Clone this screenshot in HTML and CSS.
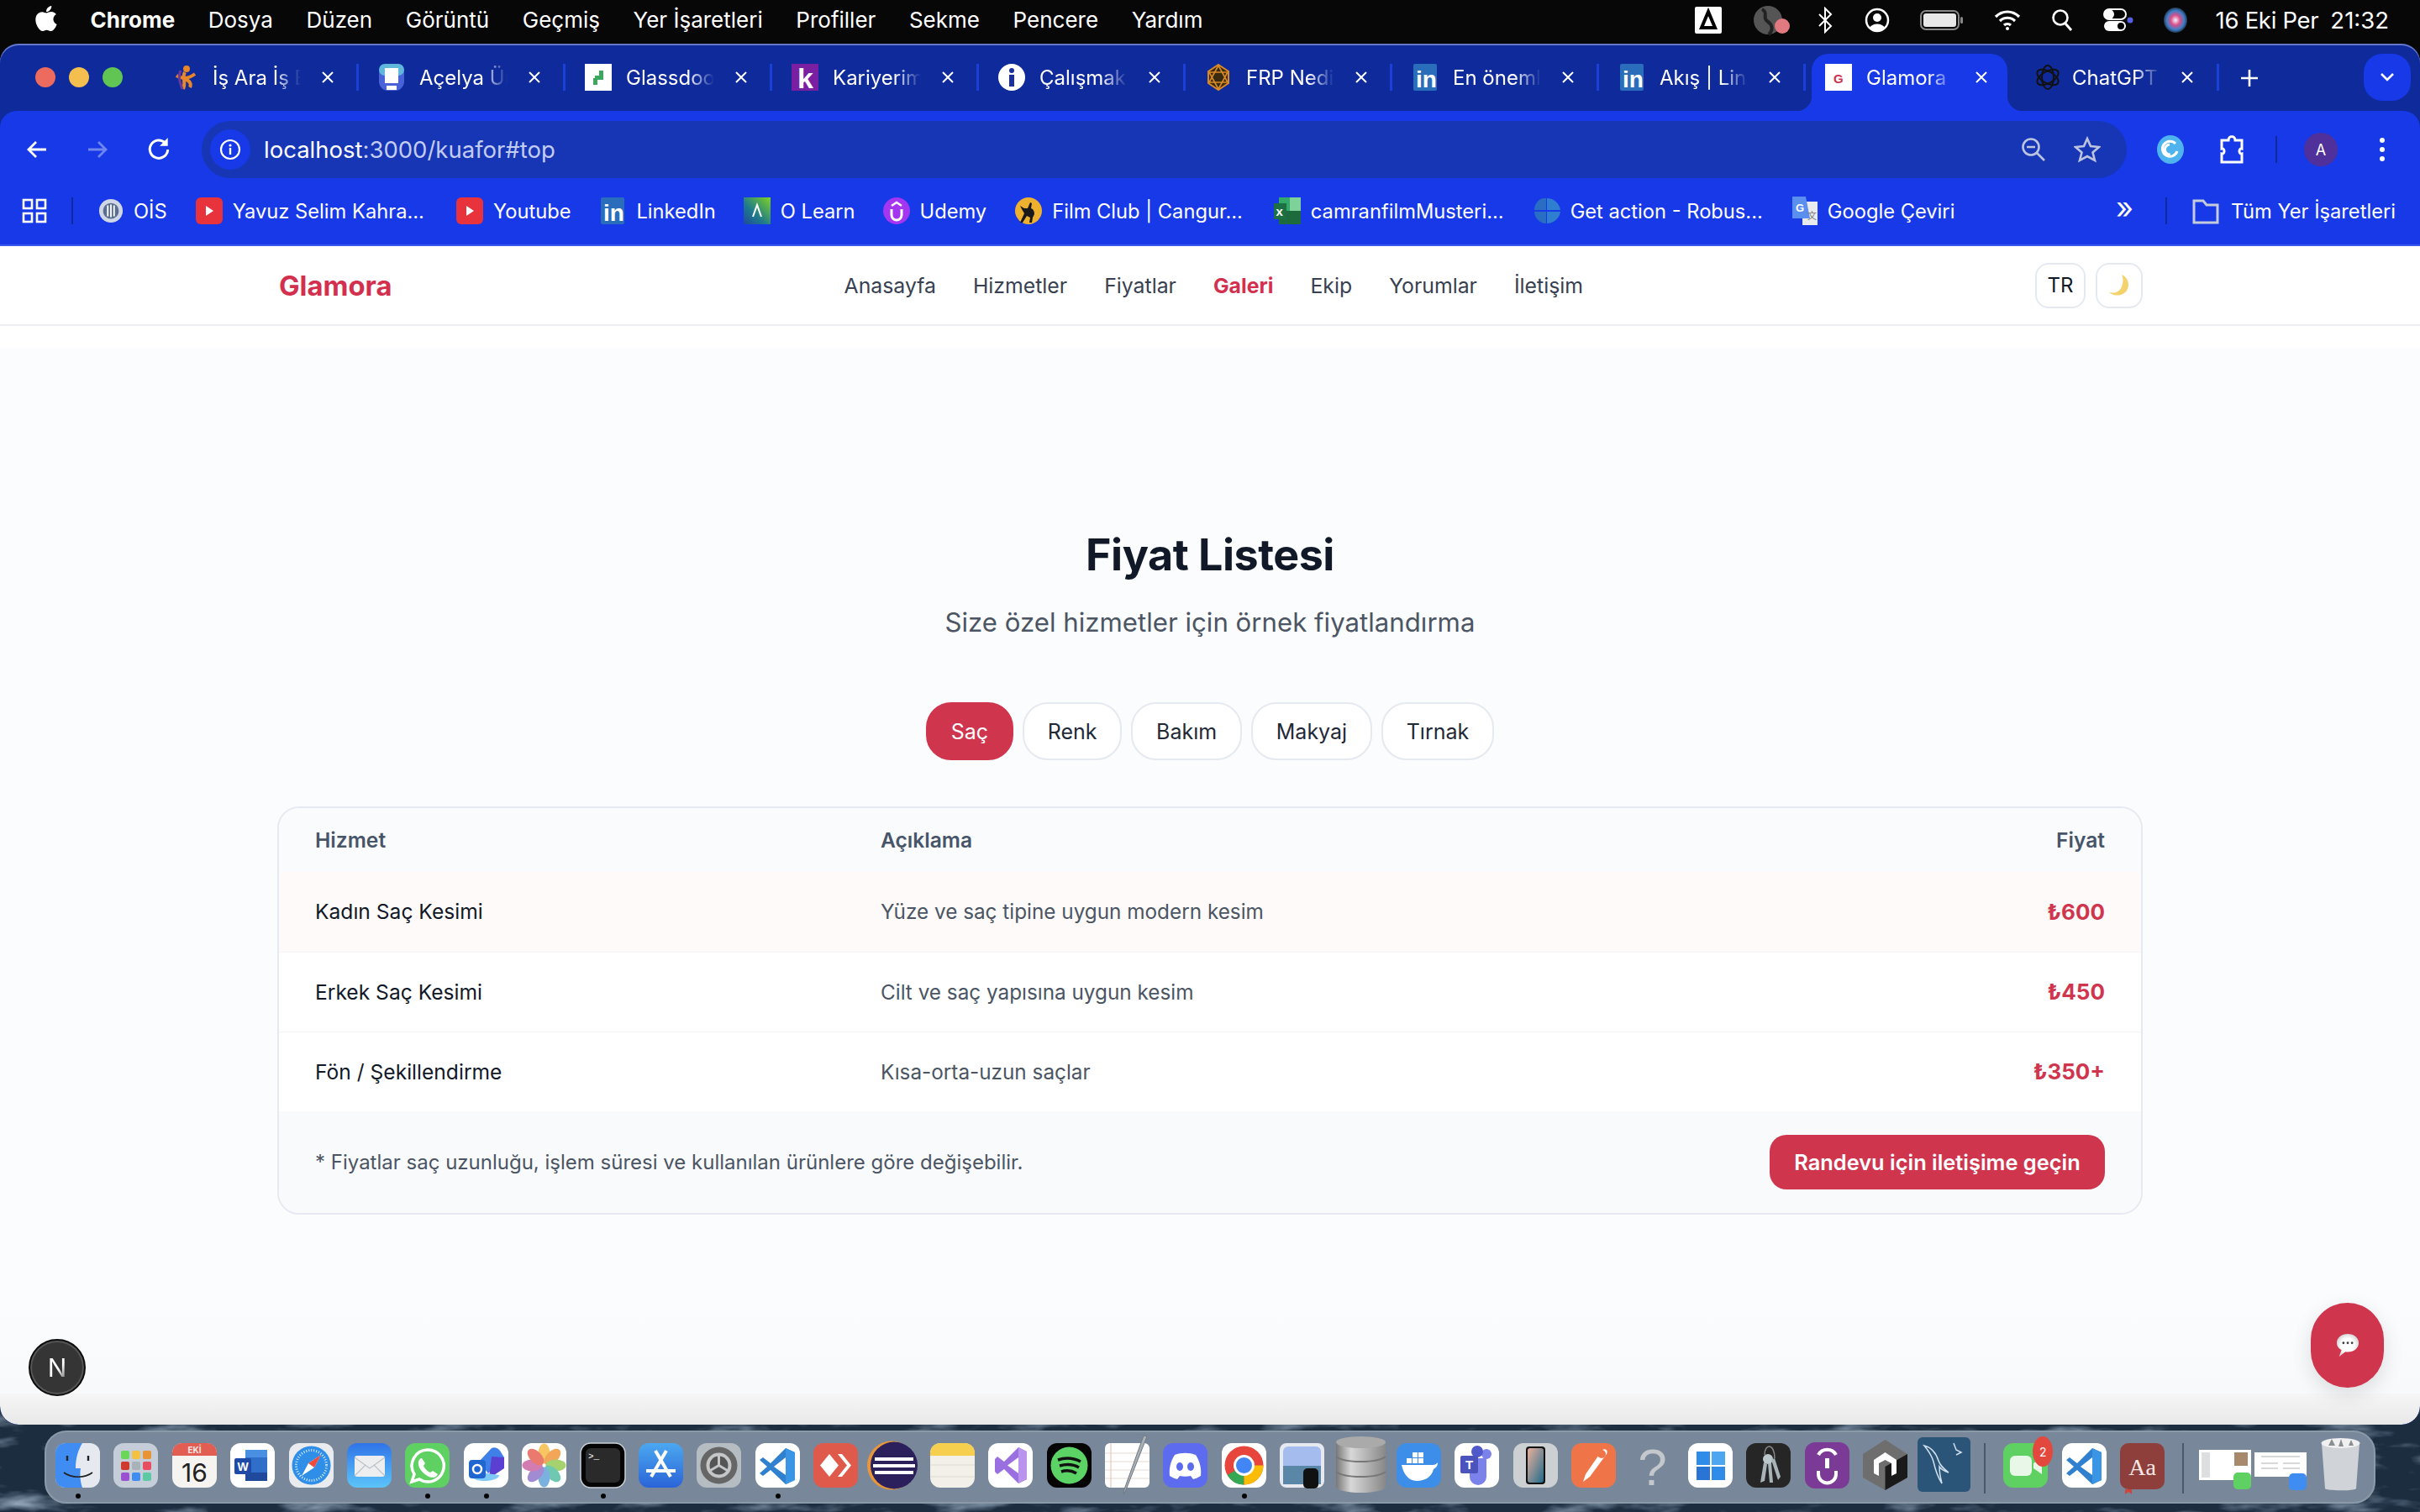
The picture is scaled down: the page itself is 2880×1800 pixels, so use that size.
FILE: index.html
```html
<!DOCTYPE html>
<html lang="tr">
<head>
  <meta charset="UTF-8">
  <title>Glamora</title>
  <link rel="stylesheet" href="styles.css">
</head>
<body>

  <svg class="wallpaper" width="2880" height="1800">
    <filter id="rock"><feTurbulence type="fractalNoise" baseFrequency="0.012 0.04" numOctaves="4" seed="7"/>
      <feColorMatrix values="0 0 0 0 .34  0 0 0 0 .44  0 0 0 0 .55  0 0 0 2.2 -1.1"/></filter>
    <rect width="2880" height="1800" fill="#1c2d40"/>
    <rect width="2880" height="1800" filter="url(#rock)"/>
    <rect width="2880" height="300" fill="#070707"/>
  </svg>

  <svg width="0" height="0" class="defs">
    <symbol id="close" viewBox="0 0 16 16"><path d="M2 2l12 12M14 2L2 14" stroke="#fff" stroke-width="2" fill="none"/></symbol>
    <symbol id="linkedin" viewBox="0 0 28 32"><rect width="28" height="32" rx="2" fill="#2a6ebb"/><text x="3" y="28" font-family="Liberation Sans" font-weight="700" font-size="28" fill="#fff">in</text></symbol>
    <symbol id="vscode" viewBox="0 0 53 53"><rect width="53" height="53" rx="12" fill="#fff"/><path d="M36 6L18 24l-9-7-4 3 9 8-9 8 4 3 9-7 18 17 11-5V11z" fill="#2f80cf"/><path d="M36 17v21L22 28z" fill="#fff"/><path d="M36 6l11 5v33l-11 5z" fill="#3a95e4"/></symbol>
  </svg>

  <!-- macos menu bar -->
  <header class="menubar">
    <div class="menu-left">
      <svg class="apple" viewBox="0 0 24 24"><path fill="#fff" d="M17.05 20.28c-.98.95-2.05.8-3.08.35-1.09-.46-2.09-.48-3.24 0-1.44.62-2.2.44-3.06-.35C2.79 15.25 3.51 7.59 9.05 7.31c1.35.07 2.29.74 3.08.8 1.18-.24 2.31-.93 3.57-.84 1.51.12 2.65.72 3.4 1.8-3.12 1.87-2.38 5.98.48 7.13-.57 1.5-1.31 2.99-2.54 4.09zM12.03 7.25c-.15-2.23 1.66-4.07 3.74-4.25.29 2.58-2.34 4.5-3.74 4.25z"/></svg>
      <b>Chrome</b><span>Dosya</span><span>Düzen</span><span>Görüntü</span><span>Geçmiş</span><span>Yer İşaretleri</span><span>Profiller</span><span>Sekme</span><span>Pencere</span><span>Yardım</span>
    </div>
    <div class="menu-right">
      <svg width="32" height="32" viewBox="0 0 32 32"><rect width="32" height="32" rx="2" fill="#fff"/><path d="M16 6L8 25h16z" fill="none" stroke="#000" stroke-width="4"/></svg>
      <svg width="46" height="38" viewBox="0 0 46 38"><circle cx="19" cy="19" r="17" fill="#555"/><path d="M12 6c8 4 0 10 6 14s8 10 2 16" stroke="#222" stroke-width="4" fill="none"/><circle cx="36" cy="26" r="9" fill="#e07a80"/></svg>
      <svg class="bt" width="18" height="32" viewBox="0 0 18 32"><path d="M2 9l14 14-7 7V2l7 7L2 23" stroke="#fff" stroke-width="2" fill="none"/></svg>
      <svg width="30" height="30" viewBox="0 0 30 30"><circle cx="15" cy="15" r="13" stroke="#fff" stroke-width="2.5" fill="none"/><circle cx="15" cy="12" r="5" fill="#fff"/><path d="M6 24c3-6 15-6 18 0-5 5-13 5-18 0z" fill="#fff"/></svg>
      <svg width="52" height="24" viewBox="0 0 52 24"><rect x="1" y="1" width="45" height="22" rx="6" stroke="#888" stroke-width="2" fill="none"/><rect x="4" y="4" width="39" height="16" rx="3" fill="#e8e8e8"/><rect x="48" y="8" width="3" height="8" rx="1.5" fill="#888"/></svg>
      <svg width="32" height="24" viewBox="0 0 32 24"><path d="M2 8c8-8 20-8 28 0M7 13c5-5 13-5 18 0M12 18c2-2 6-2 8 0" stroke="#fff" stroke-width="3.2" fill="none"/><circle cx="16" cy="22" r="2" fill="#fff"/></svg>
      <svg width="26" height="28" viewBox="0 0 26 28"><circle cx="11" cy="11" r="8.5" stroke="#fff" stroke-width="2.6" fill="none"/><path d="M17 18l7 8" stroke="#fff" stroke-width="3"/></svg>
      <svg width="36" height="28" viewBox="0 0 36 28"><rect x="1" y="1" width="26" height="12" rx="6" fill="none" stroke="#fff" stroke-width="2"/><circle cx="7" cy="7" r="6" fill="#fff"/><rect x="1" y="15" width="26" height="12" rx="6" fill="#fff"/><circle cx="21" cy="21" r="4" fill="#000"/><circle cx="32" cy="14" r="3.5" fill="#5560e0"/></svg>
      <svg width="28" height="30" viewBox="0 0 28 30"><defs><radialGradient id="siri"><stop offset="0" stop-color="#f4f4ff"/><stop offset=".4" stop-color="#d94f88"/><stop offset=".75" stop-color="#3f7fc9"/><stop offset="1" stop-color="#1f3a55"/></radialGradient></defs><ellipse cx="14" cy="15" rx="14" ry="15" fill="url(#siri)"/></svg>
      <span class="clock">16 Eki Per</span><span class="time">21:32</span>
    </div>
  </header>

  <div class="window">

    <!-- tab strip -->
    <div class="tabstrip">
      <div class="lights"><i class="red"></i><i class="yellow"></i><i class="green"></i></div>
      <div class="tab">
        <svg class="fav" viewBox="0 0 32 32"><circle cx="18" cy="6" r="4" fill="#e8862a"/><path d="M6 14c6 4 14 4 22-2M16 10c-4 6 2 10-2 20M16 18c6 2 8 6 6 10" stroke="#e8862a" stroke-width="4" fill="none"/><path d="M11 8c-4 8 0 16 2 22" stroke="#6a3a9a" stroke-width="3" fill="none"/></svg>
        <span class="tab-title">İş Ara İş Bul</span><svg class="x"><use href="#close"/></svg>
      </div>
      <div class="tab">
        <svg class="fav" viewBox="0 0 32 32"><rect x="1" y="0" width="30" height="32" rx="11" fill="#4a62d8"/><rect x="1" y="0" width="30" height="14" rx="7" fill="#5fb8dc"/><rect x="8" y="5" width="16" height="18" fill="#fff"/><rect x="10" y="26" width="12" height="5" fill="#fff"/></svg>
        <span class="tab-title">Açelya Ünal</span><svg class="x"><use href="#close"/></svg>
      </div>
      <div class="tab">
        <svg class="fav" viewBox="0 0 32 32"><rect width="32" height="32" fill="#fff"/><path d="M17 8h5v11H12v-5h5zM10 17h5v8h-5z" fill="#3da75f"/></svg>
        <span class="tab-title">Glassdoor</span><svg class="x"><use href="#close"/></svg>
      </div>
      <div class="tab">
        <svg class="fav" viewBox="0 0 32 32"><rect width="32" height="32" fill="#7b1fa2"/><text x="7" y="29" font-family="Liberation Sans" font-weight="700" font-size="34" fill="#fff">k</text></svg>
        <span class="tab-title">Kariyerim</span><svg class="x"><use href="#close"/></svg>
      </div>
      <div class="tab">
        <svg class="fav" viewBox="0 0 32 32"><circle cx="16" cy="16" r="16" fill="#fff"/><circle cx="16" cy="8" r="3" fill="#1b2f9e"/><rect x="13" y="13" width="6" height="14" fill="#1b2f9e"/></svg>
        <span class="tab-title">Çalışmak</span><svg class="x"><use href="#close"/></svg>
      </div>
      <div class="tab">
        <svg class="fav" viewBox="0 0 32 32"><path d="M16 1l12 8v14l-12 8-12-8V9z" fill="#3a2a10" stroke="#d98a24" stroke-width="2"/><path d="M5 10h22L16 30zM5 22h22L16 2z" fill="none" stroke="#d98a24" stroke-width="1.600"/></svg>
        <span class="tab-title">FRP Nedir</span><svg class="x"><use href="#close"/></svg>
      </div>
      <div class="tab">
        <svg class="fav"><use href="#linkedin"/></svg>
        <span class="tab-title">En önemli</span><svg class="x"><use href="#close"/></svg>
      </div>
      <div class="tab">
        <svg class="fav"><use href="#linkedin"/></svg>
        <span class="tab-title">Akış | LinkedIn</span><svg class="x"><use href="#close"/></svg>
      </div>
      <div class="tab active">
        <svg class="fav" viewBox="0 0 32 32"><rect width="32" height="32" fill="#fff"/><text x="10" y="23" font-family="Liberation Sans" font-weight="700" font-size="15" fill="#d2304e">G</text></svg>
        <span class="tab-title">Glamora |</span><svg class="x"><use href="#close"/></svg>
      </div>
      <div class="tab last">
        <svg class="fav" viewBox="0 0 32 32"><g fill="none" stroke="#111" stroke-width="2"><ellipse cx="16" cy="16" rx="7" ry="14"/><ellipse cx="16" cy="16" rx="7" ry="14" transform="rotate(60 16 16)"/><ellipse cx="16" cy="16" rx="7" ry="14" transform="rotate(120 16 16)"/></g></svg>
        <span class="tab-title">ChatGPT</span><svg class="x"><use href="#close"/></svg>
      </div>
      <svg class="plus" viewBox="0 0 22 22"><path d="M11 1v20M1 11h20" stroke="#fff" stroke-width="2.6"/></svg>
      <div class="tab-menu"><svg width="18" height="12" viewBox="0 0 18 12"><path d="M2 2l7 7 7-7" stroke="#fff" stroke-width="2.6" fill="none"/></svg></div>
    </div>

    <!-- address bar -->
    <div class="toolbar">
      <svg class="nav-ico" viewBox="0 0 28 28"><path d="M25 14H4M13 5l-9 9 9 9" stroke="#fff" stroke-width="2.8" fill="none"/></svg>
      <svg class="nav-ico dim" viewBox="0 0 28 28"><path d="M3 14h21M15 5l9 9-9 9" stroke="#6f86ee" stroke-width="2.8" fill="none"/></svg>
      <svg class="nav-ico reload" viewBox="0 0 28 28"><path d="M24 14a10 10 0 1 1-3-7.500" stroke="#fff" stroke-width="2.800" fill="none"/><path d="M24 1v9h-9z" fill="#fff"/></svg>
      <div class="omnibox">
        <span class="site-info"><svg width="26" height="26" viewBox="0 0 26 26"><circle cx="13" cy="13" r="11" stroke="#fff" stroke-width="2.2" fill="none"/><circle cx="13" cy="8" r="1.6" fill="#fff"/><rect x="11.8" y="11" width="2.4" height="8" fill="#fff"/></svg></span>
        <span class="url">localhost<span class="url-rest">:3000/kuafor#top</span></span>
        <svg class="omni-ico" width="32" height="32" viewBox="0 0 32 32"><circle cx="13" cy="13" r="9.5" stroke="#bcc3de" stroke-width="2.6" fill="none"/><path d="M8 13h10M20 20l9 9" stroke="#bcc3de" stroke-width="2.6"/></svg>
        <svg class="omni-ico star" width="32" height="32" viewBox="0 0 32 32"><path d="M16 3l4 9 10 1-7.500 6.500L25 29l-9-5-9 5 2.500-9.500L2 13l10-1z" stroke="#bcc3de" stroke-width="2.6" fill="none"/></svg>
      </div>
      <svg class="ext" width="32" height="34" viewBox="0 0 32 34"><ellipse cx="16" cy="17" rx="16" ry="17" fill="#4fb3ee"/><path d="M22 10a9 9 0 1 0 2 9M16 23a6 6 0 0 1-1-12" stroke="#fff" stroke-width="3" fill="none"/></svg>
      <svg class="puzzle" width="32" height="36" viewBox="0 0 32 36"><path d="M4 7h8c0-6 8-6 8 0h8v10c-4-1-4 7 0 6v10H4V23c4 1 4-7 0-6z" stroke="#fff" stroke-width="3" fill="none"/></svg>
      <i class="tool-sep"></i>
      <span class="avatar">A</span>
      <svg class="kebab" width="8" height="30" viewBox="0 0 8 30"><circle cx="4" cy="4" r="3" fill="#fff"/><circle cx="4" cy="15" r="3" fill="#fff"/><circle cx="4" cy="26" r="3" fill="#fff"/></svg>
    </div>

    <!-- bookmarks -->
    <div class="bookmarks">
      <svg class="apps" width="30" height="30" viewBox="0 0 30 30"><g stroke="#fff" stroke-width="2.6" fill="none"><rect x="2" y="2" width="10" height="10"/><rect x="18" y="2" width="10" height="10"/><rect x="2" y="18" width="10" height="10"/><rect x="18" y="18" width="10" height="10"/></g></svg>
      <i class="book-sep"></i>
      <a class="bm ois"><svg width="30" height="32" viewBox="0 0 32 32"><circle cx="16" cy="16" r="15" fill="#cfd6e6"/><circle cx="16" cy="16" r="10" fill="#5a6f8f"/><path d="M12 9v14M16 8v16M20 9v14" stroke="#fff" stroke-width="2"/></svg>OİS</a>
      <a class="bm yt"><svg width="32" height="32" viewBox="0 0 32 32"><rect width="32" height="32" rx="6" fill="#e8323c"/><path d="M12 10l9 6-9 6z" fill="#fff"/></svg>Yavuz Selim Kahra...</a>
      <a class="bm yt2"><svg width="32" height="32" viewBox="0 0 32 32"><rect width="32" height="32" rx="6" fill="#e8323c"/><path d="M12 10l9 6-9 6z" fill="#fff"/></svg>Youtube</a>
      <a class="bm li"><svg width="28" height="32"><use href="#linkedin"/></svg>LinkedIn</a>
      <a class="bm ol"><svg width="32" height="32" viewBox="0 0 32 32"><defs><linearGradient id="ol" x1="1" y1="0" x2="0" y2="1"><stop offset="0" stop-color="#7ed321"/><stop offset=".6" stop-color="#1f7a8c"/><stop offset="1" stop-color="#1f4a9c"/></linearGradient></defs><rect width="32" height="32" fill="url(#ol)"/><path d="M11 23l5-14 5 14" stroke="#fff" stroke-width="2" fill="none"/></svg>O Learn</a>
      <a class="bm um"><svg width="32" height="32" viewBox="0 0 32 32"><circle cx="16" cy="16" r="16" fill="#a435f0"/><path d="M10 14v7a6 6 0 0 0 12 0v-7" stroke="#fff" stroke-width="3" fill="none"/><path d="M10 10l6-4 6 4" stroke="#fff" stroke-width="2.500" fill="none"/></svg>Udemy</a>
      <a class="bm fc"><svg width="32" height="32" viewBox="0 0 32 32"><circle cx="16" cy="16" r="16" fill="#eeb02f"/><path d="M6 10l5 3 4 0 3-7 2 1-1 6c3 1 4 4 4 7l-2 4-1 6h-3l1-6-4-2-5 8-3 0 5-11-3-5z" fill="#1a1a1a"/></svg>Film Club | Cangur...</a>
      <a class="bm xl"><svg width="32" height="32" viewBox="0 0 32 32"><rect x="6" width="26" height="32" fill="#33a868"/><rect x="19" y="0" width="13" height="16" fill="#7fd19a"/><rect x="6" y="16" width="26" height="16" fill="#1d6b3c"/><rect y="7" width="15" height="19" fill="#1d7044"/><text x="2.500" y="22" font-family="Liberation Sans" font-weight="700" font-size="15" fill="#fff">x</text></svg>camranfilmMusteri...</a>
      <a class="bm ga"><svg width="32" height="32" viewBox="0 0 32 32"><path d="M15 1h-2C6 1 1 8 1 15h14zM1 17c0 7 6 14 14 14V17z" fill="#2a6dc5"/><path d="M16 1c8 0 15 6 16 14H16zM16 17h16c-1 8-8 14-16 14z" fill="#2f7fd0"/></svg>Get action - Robus...</a>
      <a class="bm gt"><svg width="30" height="34" viewBox="0 0 30 34"><path d="M12 6h18v28H12z" fill="#e8eaed"/><path d="M0 0h16l5 26H0z" fill="#5a8ff0"/><text x="4" y="18" font-family="Liberation Sans" font-weight="700" font-size="13" fill="#fff">G</text><text x="18" y="27" font-family="Noto Sans CJK SC" font-size="11" fill="#777">文</text></svg>Google Çeviri</a>
      <span class="book-more">»</span>
      <i class="book-sep"></i>
      <a class="bm folder"><svg width="32" height="32" viewBox="0 0 32 32"><path d="M2 4h11l4 5h13v21H2z" stroke="#c6cbdc" stroke-width="3" fill="none"/></svg>Tüm Yer İşaretleri</a>
    </div>

    <!-- page -->
    <main class="page">
      <nav class="site-nav">
        <a class="logo">Glamora</a>
        <ul class="nav-links">
          <li>Anasayfa</li>
          <li>Hizmetler</li>
          <li>Fiyatlar</li>
          <li class="current">Galeri</li>
          <li>Ekip</li>
          <li>Yorumlar</li>
          <li>İletişim</li>
        </ul>
        <div class="nav-actions">
          <button class="lang">TR</button>
          <button class="theme"><svg width="26" height="26" viewBox="0 0 26 26"><path d="M16 0c8 3 10 13 6 19-4 6-14 8-21 2 7 2 13-1 15-7 2-5 2-10 0-14z" fill="#f3d36d"/></svg></button>
        </div>
      </nav>

      <section class="pricing">
        <h1>Fiyat Listesi</h1>
        <p class="lead">Size özel hizmetler için örnek fiyatlandırma</p>

        <div class="pills">
          <button class="pill on">Saç</button>
          <button class="pill">Renk</button>
          <button class="pill">Bakım</button>
          <button class="pill">Makyaj</button>
          <button class="pill">Tırnak</button>
        </div>

        <div class="price-card">
          <table>
            <thead>
              <tr><th class="col-name">Hizmet</th><th>Açıklama</th><th class="price-col">Fiyat</th></tr>
            </thead>
            <tbody>
              <tr class="hovered"><td class="name">Kadın Saç Kesimi</td><td class="desc">Yüze ve saç tipine uygun modern kesim</td><td class="price">₺600</td></tr>
              <tr><td class="name">Erkek Saç Kesimi</td><td class="desc">Cilt ve saç yapısına uygun kesim</td><td class="price">₺450</td></tr>
              <tr><td class="name">Fön / Şekillendirme</td><td class="desc">Kısa-orta-uzun saçlar</td><td class="price">₺350+</td></tr>
            </tbody>
          </table>
          <div class="card-foot">
            <span class="note">* Fiyatlar saç uzunluğu, işlem süresi ve kullanılan ürünlere göre değişebilir.</span>
            <button class="cta">Randevu için iletişime geçin</button>
          </div>
        </div>
      </section>

      <button class="next-badge"><span>N</span></button>
      <button class="chat-fab"><svg width="28" height="30" viewBox="0 0 30 32"><defs><radialGradient id="bubble"><stop offset=".6" stop-color="#fff"/><stop offset="1" stop-color="#d8d8d8"/></radialGradient></defs><path d="M15 1c8 0 14 5 14 11.500S23 24 15 24c-1 0-2 0-3-.2L4 30l3-8.500C3 19.500 1 16 1 12.500 1 6 7 1 15 1z" fill="url(#bubble)"/><circle cx="9.500" cy="12.500" r="1.500" fill="#444"/><circle cx="15" cy="12.500" r="1.500" fill="#444"/><circle cx="20.500" cy="12.500" r="1.500" fill="#444"/></svg></button>
    </main>
  </div>

  <!-- dock -->
  <footer class="dock">
    <div class="dock-item running"><svg viewBox="0 0 53 53"><rect width="53" height="53" rx="12" fill="#e6eaf0"/><path d="M12 0C5 0 0 5 0 12v29c0 7 5 12 12 12h20c-3-9-3-17-2-23h-6c0-12 3-22 8-30z" fill="#3f8cf2"/><path d="M14 15v6M39 15v6" stroke="#222" stroke-width="2.400"/><path d="M10 35c9 7 25 7 34 0" stroke="#222" stroke-width="1.600" fill="none"/></svg></div>
    <div class="dock-item"><svg viewBox="0 0 53 53"><rect width="53" height="53" rx="12" fill="#c5ced8"/><g><rect x="9" y="9" width="10" height="10" rx="2" fill="#6ad65a"/><rect x="22" y="9" width="10" height="10" rx="2" fill="#f4c142"/><rect x="35" y="9" width="10" height="10" rx="2" fill="#e89336"/><rect x="9" y="22" width="10" height="10" rx="2" fill="#d03a2e"/><rect x="22" y="22" width="10" height="10" rx="2" fill="#a9b2b8"/><rect x="35" y="22" width="10" height="10" rx="2" fill="#e84d62"/><rect x="9" y="35" width="10" height="10" rx="2" fill="#9a52d0"/><rect x="22" y="35" width="10" height="10" rx="2" fill="#3f8cf2"/><rect x="35" y="35" width="10" height="10" rx="2" fill="#5cc9a4"/></g></svg></div>
    <div class="dock-item"><svg viewBox="0 0 53 53"><rect width="53" height="53" rx="12" fill="#f6f4f1"/><path d="M0 15V12C0 5 5 0 12 0h29c7 0 12 5 12 12v3z" fill="#e25d52"/><text x="26.500" y="12" text-anchor="middle" font-family="Inter" font-weight="700" font-size="10" fill="#f8e6e3">EKİ</text><text x="26.500" y="46" text-anchor="middle" font-family="Inter" font-size="30" fill="#222">16</text></svg></div>
    <div class="dock-item"><svg viewBox="0 0 53 53"><rect width="53" height="53" rx="12" fill="#fff"/><rect x="18" y="8" width="26" height="37" rx="2" fill="#2f6fc9"/><rect x="18" y="8" width="26" height="9" fill="#4a90e2"/><rect x="18" y="35" width="26" height="10" fill="#1f4a9c"/><rect x="5" y="18" width="20" height="19" rx="2" fill="#1e4ba8"/><text x="15" y="33" text-anchor="middle" font-family="Liberation Sans" font-weight="700" font-size="14" fill="#fff">W</text></svg></div>
    <div class="dock-item"><svg viewBox="0 0 53 53"><rect width="53" height="53" rx="12" fill="#e9ebee"/><circle cx="26.500" cy="26.500" r="23" fill="#2f8ee8"/><circle cx="26.500" cy="26.500" r="18" fill="none" stroke="#d6ecff" stroke-width="3" stroke-dasharray="1 2"/><path d="M38 14L23 24l-8 15 15-10z" fill="#fff"/><path d="M38 14L23 24l7 5z" fill="#ef4a3c"/></svg></div>
    <div class="dock-item"><svg viewBox="0 0 53 53"><defs><linearGradient id="mail" x1="0" y1="0" x2="0" y2="1"><stop offset="0" stop-color="#2f74e8"/><stop offset="1" stop-color="#5cc4fa"/></linearGradient></defs><rect width="53" height="53" rx="12" fill="url(#mail)"/><rect x="9" y="15" width="36" height="25" rx="3" fill="#eceef0"/><path d="M9 17l18 13 18-13M9 39l13-13M45 39L32 26" stroke="#bcc2c8" stroke-width="1.200" fill="none"/></svg></div>
    <div class="dock-item running"><svg viewBox="0 0 53 53"><rect width="53" height="53" rx="12" fill="#5fd062"/><path d="M27 8a19 19 0 0 0-16 29l-3 9 9-3A19 19 0 1 0 27 8z" fill="#5fd062" stroke="#fff" stroke-width="3.500"/><path d="M20 18l4 6-2 3c2 4 4 6 8 8l3-2 6 4c-2 5-8 5-14 1-6-4-10-10-9-16 1-3 2-4 4-4z" fill="#fff"/></svg></div>
    <div class="dock-item running"><svg viewBox="0 0 53 53"><rect width="53" height="53" rx="12" fill="#fff"/><path d="M18 22L33 6c3-2 8 0 10 3l5 8L29 36z" fill="#3f7fe8"/><path d="M33 16l15 1v13l-18 12z" fill="#5a3fd0"/><path d="M12 42c4 5 30 4 30-4l-30-4z" fill="#7fc9f8"/><rect x="6" y="20" width="20" height="22" rx="4" fill="#1f66d0"/><circle cx="16" cy="31" r="5" fill="none" stroke="#fff" stroke-width="2.500"/></svg></div>
    <div class="dock-item"><svg viewBox="0 0 53 53"><rect width="53" height="53" rx="12" fill="#fff"/><g transform="translate(26.500 26.500)" opacity=".8"><ellipse cy="-14" rx="7" ry="12" fill="#f6b73c"/><ellipse cy="-14" rx="7" ry="12" fill="#f0902e" transform="rotate(45)"/><ellipse cy="-14" rx="7" ry="12" fill="#8fc64a" transform="rotate(90)"/><ellipse cy="-14" rx="7" ry="12" fill="#4cbba0" transform="rotate(135)"/><ellipse cy="-14" rx="7" ry="12" fill="#5a9ed8" transform="rotate(180)"/><ellipse cy="-14" rx="7" ry="12" fill="#8a6fc9" transform="rotate(225)"/><ellipse cy="-14" rx="7" ry="12" fill="#c75c9e" transform="rotate(270)"/><ellipse cy="-14" rx="7" ry="12" fill="#e5584a" transform="rotate(315)"/></g></svg></div>
    <div class="dock-item running"><svg viewBox="0 0 53 53"><rect width="53" height="53" rx="12" fill="#050505" stroke="#c8d0d8" stroke-width="1.500"/><rect x="6" y="6" width="41" height="41" rx="6" fill="#2a2a2a"/><text x="9" y="19" font-family="Liberation Mono" font-size="11" fill="#fff">&gt;_</text></svg></div>
    <div class="dock-item"><svg viewBox="0 0 53 53"><defs><linearGradient id="store" x1="0" y1="0" x2="0" y2="1"><stop offset="0" stop-color="#4ba8f0"/><stop offset="1" stop-color="#2a64d8"/></linearGradient></defs><rect width="53" height="53" rx="12" fill="url(#store)"/><path d="M20 9l18 31M33 9L15 40M9 33h35" stroke="#fff" stroke-width="4" fill="none"/></svg></div>
    <div class="dock-item"><svg viewBox="0 0 53 53"><rect width="53" height="53" rx="12" fill="#b5bdc3"/><circle cx="26.500" cy="26.500" r="22" fill="#666"/><circle cx="26.500" cy="26.500" r="15" fill="#c4c6c8"/><circle cx="26.500" cy="26.500" r="11" fill="#555"/><path d="M26.500 26.500V15M26.500 26.500l10 6M26.500 26.500l-10 6" stroke="#c4c6c8" stroke-width="3"/></svg></div>
    <div class="dock-item running"><svg viewBox="0 0 53 53"><use href="#vscode"/></svg></div>
    <div class="dock-item"><svg viewBox="0 0 53 53"><rect width="53" height="53" rx="12" fill="#e05a4b"/><path d="M19 13l-11 13.500L19 40l11-13.500z" fill="#fff"/><path d="M29 13l11 13.500L29 40h5l11-13.500L34 13z" fill="#fff"/></svg></div>
    <div class="dock-item"><svg viewBox="0 0 53 53"><circle cx="24" cy="26.500" r="29" fill="#e8963a"/><circle cx="27" cy="26.500" r="28" fill="#2b1f5c"/><path d="M4 19h46M2 27h50M4 35h46" stroke="#fff" stroke-width="4"/></svg></div>
    <div class="dock-item"><svg viewBox="0 0 53 53"><rect width="53" height="53" rx="12" fill="#f2f0e8"/><path d="M0 15V12C0 5 5 0 12 0h29c7 0 12 5 12 12v3z" fill="#f7cf4e"/><path d="M0 26h53M0 40h53" stroke="#dcd9cf" stroke-width="1.200"/></svg></div>
    <div class="dock-item"><svg viewBox="0 0 53 53"><rect width="53" height="53" rx="12" fill="#fff"/><path d="M36 5L19 22l-8-6-3 3v15l3 3 8-6 17 17 10-5V10z" fill="#9a6fe0"/><path d="M36 17v19L23 26.500z" fill="#fff"/><path d="M36 5l10 5v33l-10 5z" fill="#b993ee"/></svg></div>
    <div class="dock-item"><svg viewBox="0 0 53 53"><rect width="53" height="53" rx="12" fill="#050505"/><circle cx="26.500" cy="26.500" r="22" fill="#5bd465"/><path d="M13 20c9-3 19-2 27 2M15 27c7-2 16-2 23 2M17 34c6-2 13-1 18 2" stroke="#111" stroke-width="3.500" fill="none"/></svg></div>
    <div class="dock-item"><svg viewBox="0 0 53 53"><rect width="53" height="53" rx="6" fill="#fff"/><path d="M0 12h53M0 22h53M0 32h53M0 42h53" stroke="#e8dcd4" stroke-width="1.200"/><path d="M7 0v53" stroke="#f0b8b0"/><path d="M50 -8L24 58l-2 3 1-6L46 -9z" fill="#a8b0b8" stroke="#70787f"/></svg></div>
    <div class="dock-item"><svg viewBox="0 0 53 53"><rect width="53" height="53" rx="12" fill="#5d6bef"/><path d="M14 14c8-3 17-3 25 0 5 8 7 16 6 25-3 2-6 3-9 4l-3-4c-4 1-9 1-13 0l-3 4c-3-1-6-2-9-4-1-9 1-17 6-25z" fill="#fff"/><ellipse cx="20" cy="28" rx="4" ry="5" fill="#5d6bef"/><ellipse cx="33" cy="28" rx="4" ry="5" fill="#5d6bef"/></svg></div>
    <div class="dock-item running"><svg viewBox="0 0 53 53"><rect width="53" height="53" rx="12" fill="#fff"/><circle cx="26.500" cy="26.500" r="23" fill="#e8453c"/><path d="M26.500 26.500L6.600 38a23 23 0 0 0 20 11.500z" fill="#34a853"/><path d="M26.500 26.500h23A23 23 0 0 1 26.500 49.500z" fill="#fbbc05"/><circle cx="26.500" cy="26.500" r="11" fill="#4285f4" stroke="#fff" stroke-width="3"/></svg></div>
    <div class="dock-item"><svg viewBox="0 0 53 53"><rect width="53" height="53" rx="8" fill="#e6eaf0"/><rect x="4" y="4" width="45" height="45" rx="6" fill="#a4bdee"/><rect x="4" y="27" width="45" height="22" fill="#5a86a8"/><rect x="28" y="30" width="18" height="24" rx="5" fill="#111"/></svg></div>
    <div class="dock-item"><svg viewBox="0 0 53 53"><defs><linearGradient id="db"><stop offset="0" stop-color="#777"/><stop offset=".3" stop-color="#d8d8d8"/><stop offset="1" stop-color="#888"/></linearGradient></defs><rect x="-3" y="-1" width="59" height="53" fill="url(#db)"/><ellipse cx="26.500" cy="-1" rx="29.500" ry="7" fill="#aaa"/><ellipse cx="26.500" cy="52" rx="29.500" ry="7" fill="url(#db)"/><path d="M-3 16c10 8 49 8 59 0M-3 34c10 8 49 8 59 0" stroke="#777" stroke-width="2" fill="none"/></svg></div>
    <div class="dock-item"><svg viewBox="0 0 53 53"><rect width="53" height="53" rx="12" fill="#3c8ee8"/><path d="M6 26h37c3 0 5-2 6-3 0 5-3 7-5 8-2 9-10 14-20 14S8 36 6 26z" fill="#fff"/><g fill="#fff"><rect x="12" y="18" width="6" height="6"/><rect x="19" y="18" width="6" height="6"/><rect x="26" y="18" width="6" height="6"/><rect x="19" y="11" width="6" height="6"/><rect x="26" y="11" width="6" height="6"/></g></svg></div>
    <div class="dock-item"><svg viewBox="0 0 53 53"><rect width="53" height="53" rx="12" fill="#fff"/><circle cx="38" cy="13" r="6" fill="#7b83eb"/><circle cx="27" cy="10" r="7" fill="#5059c9"/><path d="M18 18h20v22a10 10 0 0 1-20 0z" fill="#7b83eb"/><rect x="7" y="15" width="21" height="21" rx="2" fill="#4b53bc"/><text x="17.500" y="31" text-anchor="middle" font-family="Liberation Sans" font-weight="700" font-size="15" fill="#fff">T</text></svg></div>
    <div class="dock-item"><svg viewBox="0 0 53 53"><defs><linearGradient id="ipad" x1="0" y1="0" x2="1" y2="1"><stop offset="0" stop-color="#eab09c"/><stop offset="1" stop-color="#1f6b8c"/></linearGradient></defs><rect width="53" height="53" rx="12" fill="#cdd0d2"/><rect x="15" y="4" width="23" height="45" rx="4" fill="#111"/><rect x="17" y="6" width="19" height="41" rx="3" fill="url(#ipad)"/></svg></div>
    <div class="dock-item"><svg viewBox="0 0 53 53"><rect width="53" height="53" rx="12" fill="#ef7548"/><path d="M37 8c4-2 7 1 5 5L22 40l-8 6 3-9z" fill="#fff"/><circle cx="36" cy="13" r="5" fill="#ef7548"/></svg></div>
    <div class="dock-item"><svg viewBox="0 0 53 53"><text x="26.500" y="50" text-anchor="middle" font-family="Liberation Sans" font-size="62" fill="#c4c8cc">?</text></svg></div>
    <div class="dock-item"><svg viewBox="0 0 53 53"><rect width="53" height="53" rx="12" fill="#fff"/><g fill="#2f8ce8"><rect x="10" y="10" width="16" height="16"/><rect x="28" y="10" width="16" height="16" fill="#4da6f0"/><rect x="10" y="28" width="16" height="16" fill="#2a74d6"/><rect x="28" y="28" width="16" height="16"/></g></svg></div>
    <div class="dock-item"><svg viewBox="0 0 53 53"><rect width="53" height="53" rx="12" fill="#262626"/><circle cx="26" cy="19" r="6" fill="#bcc8cc"/><path d="M21 23l-4 24 5-2 3-20zM26 24l2 23 4 0-2-23zM30 20l8 24 3-4-7-22z" fill="#a8b4b8"/><path d="M22 14c0-14 12-14 12 4" stroke="#888" stroke-width="1.500" fill="none"/></svg></div>
    <div class="dock-item"><svg viewBox="0 0 53 53"><rect x="0" y="-1" width="53" height="55" rx="12" fill="#7b3a96"/><path d="M16 14a12 12 0 0 1 21 0M16 33v4a10 10 0 0 0 21 0v-4" stroke="#fff" stroke-width="4" fill="none"/><rect x="24" y="18" width="5" height="12" fill="#fff"/></svg></div>
    <div class="dock-item"><svg viewBox="0 0 53 53"><path d="M26.500 -4L53 13v28L26.500 56 0 41V13z" fill="#6e6e6e"/><path d="M26.500 56L53 41V13L26.500 28z" fill="#1a1a1a"/><path d="M13 20l13.500-9L40 20v16l-6 3V24l-7.500-4-7.500 4v15l-6-3z" fill="#fff"/></svg></div>
    <div class="dock-item"><svg viewBox="0 0 53 53"><rect x="-5" y="-7" width="63" height="65" rx="6" fill="#2b5479"/><path d="M3 3c9 2 14 9 17 18 2 6 6 9 12 14-6-2-9-4-11-7 0 6 1 12 3 20-5-8-8-17-10-26-2-7-6-13-11-19zM38 0l3 8 6 3-6 3" stroke="#cfe0ee" stroke-width="1.500" fill="none"/></svg></div>
    <i class="dock-sep"></i>
    <div class="dock-item"><svg viewBox="0 0 53 53"><rect width="53" height="53" rx="12" fill="#5fd062"/><rect x="8" y="15" width="26" height="24" rx="6" fill="#e8f7e8"/><path d="M36 24l10-7v20l-10-7z" fill="#e8f7e8"/></svg><span class="badge">2</span></div>
    <div class="dock-item"><svg viewBox="0 0 53 53"><use href="#vscode"/></svg></div>
    <div class="dock-item"><svg viewBox="0 0 53 53"><rect width="53" height="55" rx="10" fill="#8e3f3c"/><path d="M6 55v6l4-3 4 3v-6z" fill="#d0443e"/><text x="26.500" y="38" text-anchor="middle" font-family="Liberation Serif" font-size="28" fill="#f5e8e4">Aa</text></svg></div>
    <i class="dock-sep tight"></i>
    <div class="dock-item wide"><svg viewBox="0 0 62 53"><rect y="8" width="62" height="36" fill="#fff"/><rect x="42" y="11" width="16" height="16" fill="#a8896c"/><rect x="3" y="11" width="10" height="30" fill="#c4c8cc" opacity=".6"/><rect x="41" y="35" width="21" height="20" rx="5" fill="#5fd062"/></svg></div>
    <div class="dock-item wide second"><svg viewBox="0 0 62 53"><rect y="11" width="62" height="29" fill="#fff"/><path d="M8 16h46M8 24h20M34 24h20M8 30h20M34 30h20" stroke="#ccc" stroke-width="1.600"/><rect x="41" y="36" width="21" height="20" rx="5" fill="#3f8cf2"/></svg></div>
    <div class="dock-item"><svg viewBox="0 0 53 53"><path d="M4 0h45l-4 54c0 3-37 3-37 0z" fill="#dfe2e4" opacity=".85"/><ellipse cx="26.500" cy="0" rx="23" ry="6" fill="#f0f0f0"/><path d="M12 3l4-8 4 8zM24 4l3-9 3 9zM36 3l3-7 3 7z" fill="#8a8f94"/></svg></div>
  </footer>

</body>
</html>
```

FILE: styles.css
```css
html, body {
  margin: 0;
  width: 2880px;
  height: 1800px;
  overflow: hidden;
}

body {
  position: relative;
  display: flex;
  flex-direction: column;
  font-family: "Inter", "Liberation Sans", sans-serif;
  color: #111827;
}

button {
  font-family: inherit;
  cursor: pointer;
}

.wallpaper {
  position: absolute;
  top: 0;
  left: 0;
  z-index: -1;
}

.defs {
  position: absolute;
}

/* menu bar */
.menubar {
  height: 52px;
  box-sizing: border-box;
  padding-bottom: 5px;
  background-color: #070707;
  color: #fff;
  display: flex;
  justify-content: space-between;
  align-items: center;
  font-size: 26px;
  flex-shrink: 0;
}

.menu-left {
  display: flex;
  align-items: center;
  gap: 39.600px;
  padding-left: 35px;
}

.menu-left b {
  font-weight: 700;
}

.apple {
  width: 40px;
  height: 40px;
  margin-top: -4px;
  margin-right: -7px;
}

.menu-right {
  display: flex;
  align-items: center;
  gap: 36px;
  padding-right: 37px;
  font-size: 27.500px;
}

.bt { margin-left: -4px; margin-right: 2px; }

.clock {
  margin-left: -2px;
  margin-right: -22px;
  letter-spacing: -0.3px;
}

/* browser window */
.window {
  height: 1644px;
  background-color: #0e2a9b;
  border-radius: 22px;
  overflow: hidden;
  display: flex;
  flex-direction: column;
  flex-shrink: 0;
  box-shadow: inset 0 2px 0 #6478c8;
}

.tabstrip {
  height: 80px;
  display: flex;
  align-items: flex-start;
  color: #fff;
  font-size: 24px;
  flex-shrink: 0;
}

.lights {
  width: 182px;
  height: 80px;
  display: flex;
  align-items: center;
  gap: 16px;
  padding-left: 42px;
  box-sizing: border-box;
}

.lights i {
  width: 24px;
  height: 24px;
  border-radius: 50%;
}

.red { background-color: #ed6a5e; }
.yellow { background-color: #f4bf4f; }
.green { background-color: #61c554; }

.tab {
  width: 246px;
  height: 68px;
  margin-top: 12px;
  box-sizing: border-box;
  padding-left: 22px;
  display: flex;
  align-items: center;
  position: relative;
  flex-shrink: 0;
  border-right: 3px solid transparent;
}

.tab::after {
  content: "";
  position: absolute;
  right: -2px;
  top: 12px;
  width: 3px;
  height: 32px;
  background-color: #1b3fd9;
}

.fav {
  width: 32px;
  height: 32px;
  flex-shrink: 0;
  margin-top: -12px;
}

.tab-title {
  width: 105px;
  margin-left: 17px;
  margin-top: -12px;
  white-space: nowrap;
  overflow: hidden;
  -webkit-mask-image: linear-gradient(to right, #000 70%, transparent 100%);
  mask-image: linear-gradient(to right, #000 70%, transparent 100%);
}

.x {
  width: 16px;
  height: 16px;
  margin-left: 24px;
  margin-top: -12px;
  flex-shrink: 0;
}

.tab.active {
  background-color: #1739e7;
  width: 233px;
  margin-left: 6px;
  margin-right: 7px;
  padding-left: 16px;
  border-radius: 20px 20px 0 0;
  border-right: 0;
}

.tab.active::after { display: none; }

.tab.active::before {
  content: "";
  position: absolute;
  inset: auto -18px 0 -18px;
  height: 18px;
  z-index: 0;
  background:
    radial-gradient(circle at 0 0, #0e2a9b 18px, #1739e7 18.500px) left / 18px 18px no-repeat,
    radial-gradient(circle at 100% 0, #0e2a9b 18px, #1739e7 18.500px) right / 18px 18px no-repeat;
}

.tab.last { padding-left: 25px; }
.tab.last .tab-title { margin-left: 13px; }

.plus {
  width: 22px;
  height: 22px;
  margin-top: 30px;
  margin-left: 24px;
}

.tab-menu {
  width: 56px;
  height: 56px;
  margin-top: 12px;
  margin-left: 125px;
  background-color: #1739e7;
  border-radius: 22px;
  display: flex;
  align-items: center;
  justify-content: center;
}

.toolbar {
  height: 92px;
  background-color: #1739e7;
  border-radius: 20px 20px 0 0;
  display: flex;
  align-items: center;
  flex-shrink: 0;
  padding: 0 37px 0 30px;
  margin-bottom: -1px;
}

.nav-ico {
  width: 28px;
  height: 28px;
  margin-right: 44px;
  flex-shrink: 0;
}

.nav-ico.reload {
  width: 30px;
  height: 30px;
  margin-right: 36px;
}

.omnibox {
  width: 2291px;
  height: 68px;
  background-color: #1736b6;
  border-radius: 34px;
  display: flex;
  align-items: center;
  padding-left: 10px;
  box-sizing: border-box;
  flex-shrink: 0;
}

.site-info {
  width: 48px;
  height: 48px;
  background-color: #1739e7;
  border-radius: 50%;
  display: flex;
  align-items: center;
  justify-content: center;
}

.url {
  font-size: 27.500px;
  color: #fff;
  margin-left: 16px;
  flex: 1;
}

.url-rest { color: #c3ccf3; }

.omni-ico { margin-right: 32px; flex-shrink: 0; }
.omni-ico.star { margin-right: 31px; }

.ext { margin-left: 36px; flex-shrink: 0; }
.puzzle { margin-left: 41px; flex-shrink: 0; }

.tool-sep {
  width: 2px;
  height: 32px;
  background-color: #0e2a9b;
  margin-left: 36px;
  flex-shrink: 0;
}

.avatar {
  width: 40px;
  height: 40px;
  border-radius: 50%;
  background-color: #50309a;
  color: #fff;
  font-size: 18px;
  display: flex;
  align-items: center;
  justify-content: center;
  margin-left: 32px;
  flex-shrink: 0;
}

.kebab { margin-left: 49px; flex-shrink: 0; }

.bookmarks {
  height: 70px;
  background-color: #1739e7;
  display: flex;
  align-items: center;
  padding: 0 0 12px 26px;
  box-sizing: border-box;
  color: #fff;
  font-size: 23.700px;
  border-bottom: 2px solid #3b59ea;
  flex-shrink: 0;
}

.apps { flex-shrink: 0; }

.book-sep {
  width: 2px;
  height: 32px;
  background-color: #0e2a9b;
  margin-left: 29px;
  flex-shrink: 0;
}

.bm {
  display: flex;
  align-items: center;
  gap: 12px;
  white-space: nowrap;
  flex-shrink: 0;
}

.ois { margin-left: 30px; }
.yt { margin-left: 34px; }
.yt2 { margin-left: 38px; }
.li { margin-left: 36px; gap: 14px; }
.ol { margin-left: 33px; }
.um { margin-left: 33px; }
.fc { margin-left: 34px; }
.xl { margin-left: 37px; }
.ga { margin-left: 35px; }
.gt { margin-left: 35px; }

.book-more {
  font-size: 36px;
  margin-left: auto;
  margin-top: -8px;
}

.book-more + .book-sep { margin-left: 38px; }
.folder { margin-left: 30px; margin-right: 29px; gap: 14px; }

/* page */
.page {
  flex: 1;
  position: relative;
  background: linear-gradient(to bottom, #fff 0, #fff 121px, #fbfcfe 121px, #fbfcfe 1260px, #f8f9fb 1366px, #f6f6f7 1366px, #e8e8e9 100%);
  border-radius: 0 0 22px 22px;
  overflow: hidden;
  display: flex;
  flex-direction: column;
  align-items: center;
}

.site-nav {
  width: 100%;
  height: 95px;
  background-color: #fff;
  border-bottom: 2px solid #eceef4;
  box-sizing: border-box;
  padding: 0 330px 0 332px;
  display: flex;
  align-items: center;
  justify-content: space-between;
  flex-shrink: 0;
}

.logo {
  font-size: 32.800px;
  font-weight: 700;
  color: #d2304e;
}

.nav-links {
  list-style: none;
  display: flex;
  gap: 44px;
  margin: 0;
  padding: 0;
  font-size: 24.800px;
  color: #374151;
}

.nav-links .current {
  color: #d2304e;
  font-weight: 700;
}

.nav-actions {
  display: flex;
  gap: 12px;
}

.lang, .theme {
  height: 54px;
  border: 2px solid #e5e9f0;
  border-radius: 16px;
  background-color: #fff;
  color: #111827;
  font-size: 24px;
  font-weight: 400;
  display: flex;
  align-items: center;
  justify-content: center;
  padding: 0;
}

.lang { width: 60px; }
.theme { width: 56px; }

.pricing {
  width: 2220px;
  display: flex;
  flex-direction: column;
  align-items: center;
}

h1 {
  font-size: 52px;
  font-weight: 700;
  letter-spacing: -0.5px;
  line-height: 64px;
  margin: 241px 0 0;
  color: #111827;
}

.lead {
  font-size: 31.200px;
  line-height: 40px;
  margin: 28px 0 0;
  color: #4b5563;
}

.pills {
  display: flex;
  gap: 11px;
  margin-top: 75px;
}

.pill {
  height: 69px;
  border: 2px solid #e5e9f0;
  background-color: #fff;
  border-radius: 30px;
  padding: 0 27.800px;
  font-size: 25px;
  color: #1f2937;
}

.pill.on {
  background-color: #d0354e;
  border-color: #d0354e;
  color: #fff;
}

.price-card {
  width: 100%;
  margin-top: 55px;
  border: 2px solid #e6e9f1;
  border-radius: 26px;
  box-sizing: border-box;
  overflow: hidden;
  background-color: #fff;
}

table {
  width: 100%;
  border-collapse: collapse;
  font-size: 24.600px;
}

thead tr {
  background-color: #fafbfd;
  height: 76px;
}

th {
  text-align: left;
  font-weight: 600;
  color: #475569;
  padding: 0 43px;
}

.col-name { width: 587px; }
th.price-col, .price { text-align: right; }

tbody tr {
  height: 95px;
  border-bottom: 1px solid #f3f4f6;
}

tbody tr:last-child { border-bottom: 0; }

td { padding: 0 43px; }

.hovered { background-color: #fefaf9; }
.name { color: #111827; }

.desc {
  color: #4b5563;
  font-size: 24.300px;
}

.price {
  color: #d0354e;
  font-weight: 700;
  font-size: 26px;
}

.card-foot {
  height: 121px;
  background-color: #f9fafc;
  display: flex;
  align-items: center;
  justify-content: space-between;
  padding: 0 43px;
}

.note {
  font-size: 24px;
  color: #4b5563;
}

.cta {
  width: 399px;
  height: 65px;
  border: 0;
  border-radius: 20px;
  background-color: #d0354e;
  color: #fff;
  font-size: 25.400px;
  font-weight: 600;
}

.next-badge {
  position: absolute;
  left: 34px;
  bottom: 34px;
  width: 68px;
  height: 68px;
  border-radius: 50%;
  background-color: #353535;
  border: 2px solid #0d0d0d;
  box-shadow: inset 0 0 0 2px #555;
  font-size: 30px;
  font-weight: 400;
  padding: 0;
}

.next-badge span {
  background: linear-gradient(135deg, #fff 55%, #777 90%);
  -webkit-background-clip: text;
  background-clip: text;
  color: transparent;
}

.chat-fab {
  position: absolute;
  left: 2750px;
  top: 1258px;
  width: 87px;
  height: 101px;
  border: 0;
  border-radius: 44px;
  background-color: #d0354e;
  box-shadow: 0 8px 24px rgba(0, 0, 0, 0.12);
  display: flex;
  align-items: center;
  justify-content: center;
}

/* dock */
.dock {
  margin: 7px 0 0 53px;
  width: 2774px;
  height: 87px;
  box-sizing: border-box;
  background-color: #78889a;
  border: 2px solid #8b9aa9;
  border-radius: 26px;
  display: flex;
  gap: 16.400px;
  padding: 13px 0 0 11px;
}

.dock-item {
  width: 53px;
  height: 53px;
  position: relative;
  flex-shrink: 0;
}

.dock-item svg {
  width: 53px;
  height: 53px;
  overflow: visible;
  display: block;
}

.dock-item.wide { width: 62px; margin-right: -12px; }
.dock-item.wide.second { margin-right: -3px; }
.dock-item.wide svg { width: 62px; height: 53px; }

.dock-item.running::after {
  content: "";
  position: absolute;
  left: 24px;
  top: 60px;
  width: 6px;
  height: 6px;
  border-radius: 50%;
  background-color: #050505;
}

.badge {
  position: absolute;
  right: -6px;
  top: -8px;
  width: 24px;
  height: 36px;
  border-radius: 50%;
  background-color: #e2483d;
  color: #fff;
  font-size: 14px;
  display: flex;
  align-items: center;
  justify-content: center;
}

.dock-sep {
  width: 2px;
  height: 60px;
  background-color: #4c5866;
  margin: 0 5px;
  flex-shrink: 0;
}

.dock-sep.tight { margin-right: 1px; }
```
